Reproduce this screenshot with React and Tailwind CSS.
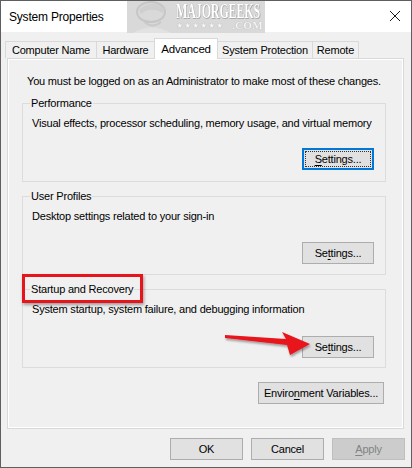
import React from 'react';

const Btn = ({ children, className = '' }) => (
  <div className={`h-[22px] border border-[#adadad] bg-[#e1e1e1] flex items-center justify-center text-black whitespace-nowrap ${className}`}>
    {children}
  </div>
);

const tabs = [
  { name: 'Computer Name', w: 'w-[92px]' },
  { name: 'Hardware', w: 'w-[59px]' },
  { name: 'Advanced', w: 'w-[64px]', active: true },
  { name: 'System Protection', w: 'w-[96px]' },
  { name: 'Remote', w: 'w-[47px]' },
];

const Group = ({ title, text, children, label }) => (
  <fieldset className="ml-[14px] w-[364px] h-[86px] border border-[#dcdcdc] min-w-0">
    <legend className="ml-[7px] px-[1px] leading-[15px] relative">
      {title}
      {label}
    </legend>
    <p className="ml-[9px] mt-[5px] leading-[15px]">{text}</p>
    {children}
  </fieldset>
);

const Watermark = () => (
  <div className="absolute left-[126px] -top-[1px] w-[138px] h-[33px] bg-[#d9d9d9] overflow-hidden">
    <svg width="48" height="33" viewBox="0 0 48 33" className="absolute left-0 top-0">
      <ellipse cx="24" cy="12" rx="14" ry="10" fill="none" stroke="#c6c6c6" strokeWidth="2" />
      <path d="M12 10 Q24 -2 38 9 L36 13 Q24 6 14 14 Z" fill="#cfcfcf" />
      <path d="M16 20 Q24 30 34 22" fill="none" stroke="#c9c9c9" strokeWidth="2" />
      <path d="M6 33 Q24 22 44 33" fill="#e2e2e2" />
    </svg>
    <div className="absolute left-[49px] top-[3px] whitespace-nowrap origin-top-left [transform:scaleX(0.6)] font-['Liberation_Serif',serif] font-bold text-[20px] leading-[16px] text-white [text-shadow:0_0_1px_#8f8f8f,1px_1px_0_#adadad]">
      MAJORGEEKS
    </div>
    <div className="absolute left-[49px] top-[21px] flex items-center whitespace-nowrap text-[8px] leading-[9px] text-[#f4f4f4] [text-shadow:0_0_1px_#a0a0a0]">
      <span className="tracking-[1px]">★★★★★★</span>
      <span className="ml-[8px] font-['Liberation_Serif',serif] font-bold text-[11px] tracking-[0.3px]">.COM</span>
    </div>
  </div>
);

const App = () => {
  return (
    <div className="w-[412px] h-[468px] bg-[#f0f0f0] border border-[#5f5f5f] flex flex-col overflow-hidden font-['Liberation_Sans',Arial,sans-serif] text-[11px] tracking-[-0.2px] text-black whitespace-nowrap relative">
      {/* title bar */}
      <div className="h-[31px] bg-white flex items-center pl-[8px] relative shrink-0">
        <span className="text-[12px]">System Properties</span>
        <Watermark />
        <svg width="12" height="12" viewBox="0 0 12 12" className="absolute left-[388px] top-[9px]">
          <path d="M1 1 L11 11 M11 1 L1 11" stroke="#1a1a1a" strokeWidth="1" />
        </svg>
      </div>

      {/* tabs */}
      <div className="mt-[6px] ml-[4px] h-[20px] flex items-end shrink-0">
        {tabs.map((t, i) =>
          t.active ? (
            <div
              key={t.name}
              className={`${t.w} -ml-px h-[21px] -mb-px relative z-10 bg-white border border-b-0 border-[#d9d9d9] flex items-start justify-center pt-[2px] text-[11.5px]`}
            >
              {t.name}
            </div>
          ) : (
            <div
              key={t.name}
              className={`${t.w} ${i === 0 ? '' : '-ml-px'} h-[17px] border border-b-0 border-[#d9d9d9] flex items-center justify-center`}
            >
              {t.name}
            </div>
          )
        )}
      </div>

      {/* tab page */}
      <div className="ml-[6px] w-[397px] h-[371px] border border-[#d9d9d9] bg-[#f0f0f0] shadow-[inset_0_0_0_1px_#ffffff] shrink-0">
        <p className="mt-[15px] ml-[19px] leading-[15px]">
          You must be logged on as an Administrator to make most of these changes.
        </p>

        <div className="mt-[7px]">
          <Group title="Performance" text="Visual effects, processor scheduling, memory usage, and virtual memory">
            <div className="flex justify-end pr-[11px] mt-[17px]">
              <div className="w-[72px] h-[22px] border-2 border-[#0078d7] bg-[#e1e1e1] flex items-center justify-center p-[1px]">
                <div className="w-full h-full border border-dotted border-[#333] flex items-center justify-center">
                  <span><span className="underline underline-offset-2">S</span>ettings...</span>
                </div>
              </div>
            </div>
          </Group>
        </div>

        <div className="mt-[7px]">
          <Group title="User Profiles" text="Desktop settings related to your sign-in">
            <div className="flex justify-end pr-[11px] mt-[18px]">
              <Btn className="w-[72px]">
                <span>Se<span className="underline underline-offset-2">t</span>tings...</span>
              </Btn>
            </div>
          </Group>
        </div>

        <div className="mt-[7px]">
          <Group
            title="Startup and Recovery"
            text="System startup, system failure, and debugging information"
            label={
              <span className="absolute -left-[8px] -top-[8px] w-[121px] h-[29px] border-[3px] border-[#e8141b] shadow-[1px_2px_3px_rgba(0,0,0,0.35)]" />
            }
          >
            <div className="flex justify-end pr-[11px] mt-[19px]">
              <Btn className="w-[72px]">
                <span>Se<span className="underline underline-offset-2">t</span>tings...</span>
              </Btn>
            </div>
          </Group>
        </div>

        <div className="mt-[14px] ml-[250px]">
          <Btn className="w-[126px]">
            <span>Enviro<span className="underline underline-offset-2">n</span>ment Variables...</span>
          </Btn>
        </div>
      </div>

      {/* red arrow annotation */}
      <svg width="96" height="32" viewBox="0 0 96 32" className="absolute left-[219px] top-[325px]">
        <defs>
          <filter id="sh" x="-10%" y="-30%" width="130%" height="160%">
            <feDropShadow dx="1" dy="2" stdDeviation="1.2" floodColor="#000" floodOpacity="0.35" />
          </filter>
        </defs>
        <polygon
          points="5,9 66,13 62,6 90,18 70,29 67,19 5,12"
          fill="#e8141b"
          filter="url(#sh)"
        />
      </svg>

      {/* bottom buttons */}
      <div className="mt-[9px] flex justify-end gap-[8px] mr-[6px] shrink-0">
        <Btn className="w-[73px]">OK</Btn>
        <Btn className="w-[73px]">Cancel</Btn>
        <div className="w-[73px] h-[22px] border border-[#bfbfbf] bg-[#cccccc] flex items-center justify-center text-[#838383]">
          <span><span className="underline underline-offset-2">A</span>pply</span>
        </div>
      </div>
    </div>
  );
};

export default App;
